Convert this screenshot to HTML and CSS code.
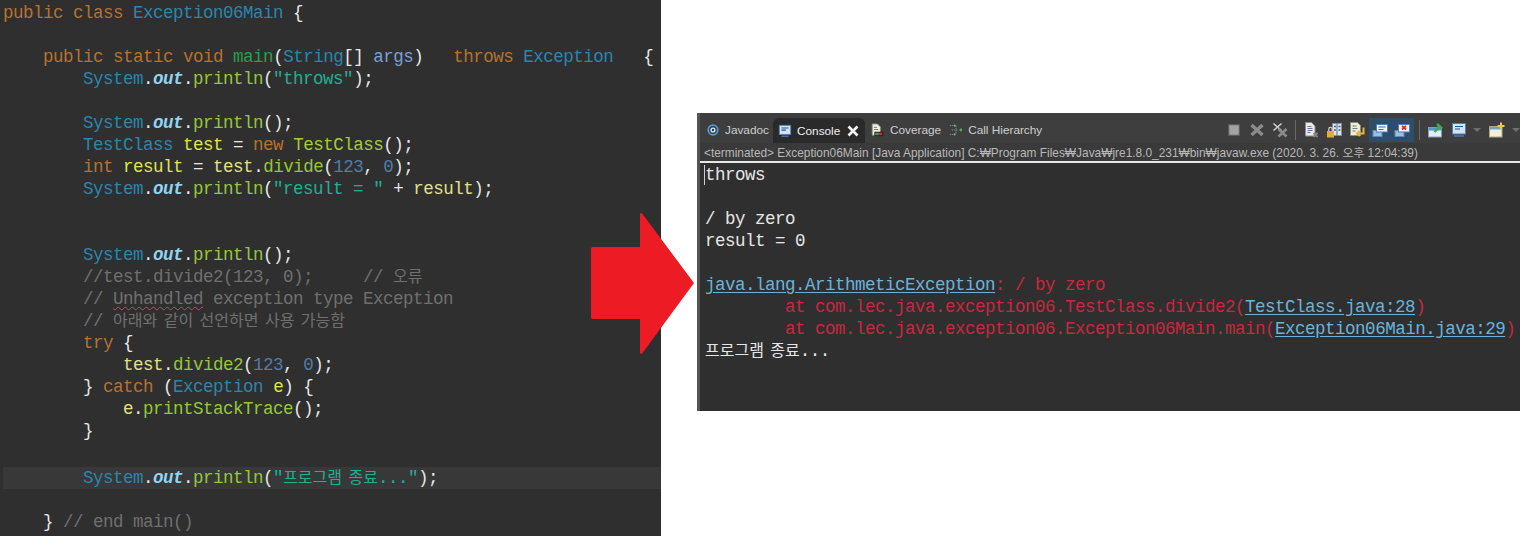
FILE: index.html
```html
<!DOCTYPE html>
<html lang="ko">
<head>
<meta charset="utf-8">
<title>Exception06Main</title>
<link rel="stylesheet" href="styles.css">
</head>
<body>
<main class="page">
<section class="editor">
<div class="code">
<div class="ln"><span class="kw">public</span> <span class="kw">class</span> <span class="ty">Exception06Main</span> <span class="pn">{</span></div>
<div class="ln"> </div>
<div class="ln">    <span class="kw">public</span> <span class="kw">static</span> <span class="kw">void</span> <span class="fn">main</span><span class="pn">(</span><span class="ty">String</span><span class="pn">[]</span> <span class="ar">args</span><span class="pn">)</span>   <span class="kw">throws</span> <span class="ty">Exception</span>   <span class="pn">{</span></div>
<div class="ln">        <span class="ty">System</span><span class="pn">.</span><span class="st">out</span><span class="pn">.</span><span class="me">println</span><span class="pn">(</span><span class="sl">"throws"</span><span class="pn">);</span></div>
<div class="ln"> </div>
<div class="ln">        <span class="ty">System</span><span class="pn">.</span><span class="st">out</span><span class="pn">.</span><span class="me">println</span><span class="pn">();</span></div>
<div class="ln">        <span class="ty">TestClass</span> <span class="va">test</span> <span class="pn">=</span> <span class="kw">new</span> <span class="me2">TestClass</span><span class="pn">();</span></div>
<div class="ln">        <span class="kw">int</span> <span class="va">result</span> <span class="pn">=</span> <span class="va2">test</span><span class="pn">.</span><span class="me">divide</span><span class="pn">(</span><span class="nu">123</span><span class="pn">,</span> <span class="nu">0</span><span class="pn">);</span></div>
<div class="ln">        <span class="ty">System</span><span class="pn">.</span><span class="st">out</span><span class="pn">.</span><span class="me">println</span><span class="pn">(</span><span class="sl">"result = "</span> <span class="pn">+</span> <span class="va2">result</span><span class="pn">);</span></div>
<div class="ln"> </div>
<div class="ln"> </div>
<div class="ln">        <span class="ty">System</span><span class="pn">.</span><span class="st">out</span><span class="pn">.</span><span class="me">println</span><span class="pn">();</span></div>
<div class="ln">        <span class="cm">//test.divide2(123, 0);     // <span class="ko">오류</span></span></div>
<div class="ln">        <span class="cm">// <span class="squig">Unhandled</span> exception type Exception</span></div>
<div class="ln">        <span class="cm">// <span class="ko">아래와 같이 선언하면 사용 가능함</span></span></div>
<div class="ln">        <span class="kw">try</span> <span class="pn">{</span></div>
<div class="ln">            <span class="va2">test</span><span class="pn">.</span><span class="me">divide2</span><span class="pn">(</span><span class="nu">123</span><span class="pn">,</span> <span class="nu">0</span><span class="pn">);</span></div>
<div class="ln">        <span class="pn">}</span> <span class="kw">catch</span> <span class="pn">(</span><span class="ty">Exception</span> <span class="va">e</span><span class="pn">)</span> <span class="pn">{</span></div>
<div class="ln">            <span class="va2">e</span><span class="pn">.</span><span class="me">printStackTrace</span><span class="pn">();</span></div>
<div class="ln">        <span class="pn">}</span></div>
<div class="ln"> </div>
<div class="ln current">        <span class="ty">System</span><span class="pn">.</span><span class="st">out</span><span class="pn">.</span><span class="me">println</span><span class="pn">(</span><span class="sl">"<span class="ko">프로그램 종료</span>..."</span><span class="pn">);</span></div>
<div class="ln"> </div>
<div class="ln">    <span class="pn">}</span> <span class="cm">// end main()</span></div>
</div>
</section>
<section class="console">
<div class="tabbar">
<div class="tab t-javadoc"><svg class="ico" viewBox="0 0 16 16"><circle cx="8" cy="8" r="5.500" fill="none" stroke="#4f9bd6" stroke-width="2"/><circle cx="8" cy="8" r="2.200" fill="none" stroke="#dbe9f4" stroke-width="1.500"/></svg><span>Javadoc</span></div>
<div class="tab active"><svg class="ico" viewBox="0 0 16 16"><rect x="1.500" y="1.500" width="13" height="10.500" fill="#d5e2ef" stroke="#4d7fb8"/><path d="M4 4.500h8M4 7h5" stroke="#27558f" stroke-width="1.200"/><path d="M4 14h8" stroke="#4d7fb8" stroke-width="1.400"/></svg><span>Console</span><svg class="close" viewBox="0 0 12 12"><path d="M1.500 1.500l9 9M10.500 1.500l-9 9" stroke="#f4f4f4" stroke-width="2.600"/></svg></div>
<div class="tab t-cov"><svg class="ico" viewBox="0 0 16 16"><path d="M2.500 1h6l3.500 3.500V14h-9.500z" fill="#efeddf" stroke="#85857a"/><path d="M4.500 5h3.500M4.500 7.500h5" stroke="#6d6d6d"/><rect x="5" y="10" width="10" height="5" fill="#1a1a1a"/><rect x="6" y="11" width="4" height="3" fill="#31a84a"/><rect x="10" y="11" width="4" height="3" fill="#cf2f28"/></svg><span>Coverage</span></div>
<div class="tab"><svg class="ico" viewBox="0 0 16 16"><path d="M1 3h4M1 13h4M3 8h7M8 3v10" stroke="#8d9a8d" stroke-dasharray="1.500 1"/><circle cx="13.500" cy="8" r="1.600" fill="#3fb45e"/><circle cx="6.500" cy="3" r="1.200" fill="#5fb872"/><circle cx="6.500" cy="13" r="1.200" fill="#5fb872"/></svg><span>Call Hierarchy</span></div>
<div class="tools">
<svg class="tool" viewBox="0 0 16 16"><rect x="3" y="3" width="10" height="10" fill="#a3a3a3" stroke="#7f7f7f"/></svg>
<svg class="tool" viewBox="0 0 16 16"><path d="M2.500 3l11 10M13.500 3l-11 10" stroke="#8c8c8c" stroke-width="3.400"/></svg>
<svg class="tool" viewBox="0 0 16 16"><path d="M1.500 1.500l8 7M9.500 1.500l-8 7" stroke="#cfcfcf" stroke-width="1.600"/><path d="M6.500 7l8 7.500M14.500 7l-8 7.500" stroke="#8b8b8b" stroke-width="2.600"/></svg>
<i class="sep"></i>
<svg class="tool" viewBox="0 0 16 16"><path d="M2.500 .5h6l3.500 3.500v10H2.500z" fill="#ecebe0" stroke="#8d8d80"/><path d="M4.500 4.500h4M4.500 6.500h5M4.500 8.500h5M4.500 10.500h3" stroke="#5f7ba0"/><path d="M10.500 11l4 4M14.500 11l-4 4" stroke="#858585" stroke-width="1.800"/></svg>
<svg class="tool" viewBox="0 0 16 16"><rect x="6.500" y="1.500" width="9" height="12" fill="#e0e5ea" stroke="#868e96"/><path d="M11 1.500v12" stroke="#4a6a9a"/><path d="M8 4.500h2M8 8h2M12.500 4.500h2M12.500 8h2" stroke="#3f6199" stroke-width="1.600"/><rect x="1" y="9" width="7" height="6.500" fill="#e4ae34"/><path d="M2.800 9V7a1.700 1.700 0 013.400 0v2" fill="none" stroke="#d2d2d2" stroke-width="1.200"/></svg>
<svg class="tool" viewBox="0 0 16 16"><path d="M1.500 .5h7l3 3v10h-10z" fill="#efecd4" stroke="#8d8d80"/><path d="M3.500 4h4M3.500 6.500h5M3.500 9h3" stroke="#6a7b8f"/><path d="M14.500 5.500v6H8.500M10.800 9L8 11.500l2.800 2.500" fill="none" stroke="#e4b545" stroke-width="2"/></svg>
<span class="toggle">
<svg class="tool" viewBox="0 0 16 16"><rect x="1" y="8.500" width="9" height="6" fill="#9fbedd" stroke="#5f88b4"/><rect x="4.500" y="2.500" width="11" height="7.500" fill="#eef3f8" stroke="#4e7fb5"/><path d="M6.500 5h7M6.500 7.500h5" stroke="#3d6ca5"/></svg>
<svg class="tool" viewBox="0 0 16 16"><rect x="1" y="8.500" width="9" height="6" fill="#9fbedd" stroke="#5f88b4"/><rect x="4.500" y="2.500" width="11" height="7.500" fill="#eef3f8" stroke="#4e7fb5"/><path d="M8 4l4 3.500M12 4l-4 3.500" stroke="#d32c2c" stroke-width="1.700"/></svg>
</span>
<i class="sep"></i>
<svg class="tool pin" viewBox="0 0 16 16"><rect x=".5" y="5.500" width="13" height="9.500" fill="#e4ebf1" stroke="#7fa0ba"/><rect x="1" y="6" width="12" height="2.500" fill="#5596cc"/><path d="M6.500 10l5-5.500M9 2l5 4.500" stroke="#3cab4e" stroke-width="2.600"/></svg>
<span class="drop"><svg class="tool" viewBox="0 0 16 16"><rect x="1.500" y="1.500" width="13" height="10.500" fill="#d5e2ef" stroke="#4d7fb8"/><path d="M4 4.500h8M4 7h5" stroke="#27558f" stroke-width="1.200"/><path d="M3 14h10" stroke="#4d7fb8" stroke-width="1.400"/></svg><b class="caret"></b></span>
<span class="drop last"><svg class="tool" viewBox="0 0 16 16"><rect x=".5" y="4.500" width="12.500" height="10.500" fill="#f2efd6" stroke="#a9a686"/><rect x="1" y="5" width="11.500" height="2.500" fill="#6fa3d0"/><path d="M12 .5v7M8.500 4h7" stroke="#ecc650" stroke-width="2"/></svg><b class="caret"></b></span>
</div>
</div>
<div class="status">&lt;terminated&gt; Exception06Main [Java Application] C:₩Program Files₩Java₩jre1.8.0_231₩bin₩javaw.exe (2020. 3. 26. 오후 12:04:39)</div>
<div class="output">
<div class="ln"><span class="caretline">t</span>hrows</div>
<div class="ln"> </div>
<div class="ln">/ by zero</div>
<div class="ln">result = 0</div>
<div class="ln"> </div>
<div class="ln"><a class="lnk">java.lang.ArithmeticException</a><span class="err">: / by zero</span></div>
<div class="ln err">        at com.lec.java.exception06.TestClass.divide2(<a class="lnk">TestClass.java:28</a>)</div>
<div class="ln err">        at com.lec.java.exception06.Exception06Main.main(<a class="lnk">Exception06Main.java:29</a>)</div>
<div class="ln"><span class="ko">프로그램 종료</span>...</div>
</div>
</section>
<svg class="arrow" viewBox="0 0 103 143"><path d="M49 2 Q50 0 51.500 2 L103 71 L51.500 141 Q50 143 49 141 V107 H2 Q0 107 0 105 V37 Q0 35 2 35 H49Z" fill="#ed1c24"/></svg>
</main>
</body>
</html>
```
FILE: styles.css
```css
* { box-sizing: border-box; }
html, body { margin: 0; padding: 0; background: #fff; }
body { width: 1520px; height: 536px; overflow: hidden; }
.page { position: relative; display: flex; align-items: flex-start; width: 1520px; height: 536px; }
.code, .output { font-family: "Liberation Mono", "Noto Sans CJK KR", monospace; font-size: 17.5px; letter-spacing: -0.5px; }
.ln { white-space: pre; height: 22px; }
.ko { font-family: "Noto Sans CJK KR", sans-serif; font-size: 16px; letter-spacing: 0; word-spacing: 2px; line-height: 0; }
.editor { flex: 0 0 661px; height: 536px; background: #2f2f2f; padding: 1px 0 0 3px; overflow: hidden; }
.code { line-height: 22px; color: #d9e8f7; padding-top: 1px; }
.current { background: #383838; margin-top: 3px; }
.kw { color: #b8722e; }
.ty { color: #2a86ae; }
.pn { color: #e8e8e8; }
.fn { color: #27a04c; }
.ar { color: #7a9fd8; }
.st { color: #8fd4f2; font-weight: bold; font-style: italic; }
.me { color: #94c83c; }
.me2 { color: #a4cc3a; }
.sl { color: #1faf94; }
.va { color: #dfe64a; }
.va2 { color: #e2e088; }
.nu { color: #4f7ea8; }
.cm { color: #6f6f6f; }
.squig { text-decoration: underline wavy #b0506a 1px; text-underline-offset: 2px; }
.console { flex: 1; margin: 113px 0 0 36px; height: 298px; background: #2f2f2f; border-left: 3px solid #545454; display: flex; flex-direction: column; }
.tabbar { flex: 0 0 30px; background: #3e3e3e; display: flex; align-items: stretch; font: 11.800px "Liberation Sans", "Noto Sans CJK KR", sans-serif; color: #cfcfcf; padding-left: 3px; }
.tab { display: flex; align-items: center; gap: 5px; padding: 4px 5px 0 3px; }
.t-javadoc { width: 70px; }
.t-cov { margin-left: 2px; gap: 6px; }
.tab.active { background: #2a2a2a; border-radius: 6px 6px 0 0; color: #f0f0f0; margin-top: 5px; padding: 0 4px 0 5px; width: 92px; }
.ico { width: 14px; height: 14px; flex: none; }
.close { width: 12px; height: 12px; margin-left: 2px; }
.tools { margin-left: auto; display: flex; align-items: center; gap: 7px; padding-top: 4px; }
.tool { width: 16px; height: 16px; display: block; }
.sep { width: 1px; height: 20px; background: #6a6a6a; }
.toggle { display: flex; gap: 6px; background: #2f4d69; padding: 0 0 0 3px; width: 45px; height: 24px; align-items: center; margin: 0 -2px 0 -3px; }
.pin { margin-left: 1px; }
.drop { display: flex; align-items: center; gap: 6px; }
.drop.last { gap: 7px; margin-left: 1px; }
.caret { width: 0; height: 0; border-left: 4px solid transparent; border-right: 4px solid transparent; border-top: 4px solid #6e6e6e; }
.status { flex: 0 0 20px; background: #3a3a3a; border-bottom: 2px solid #e6e6e6; color: #b8b8b8; padding-left: 4px; font: 11.900px/21px "Liberation Sans", "Noto Sans CJK KR", sans-serif; white-space: nowrap; overflow: hidden; }
.output { line-height: 22px; color: #e6e6e6; padding: 1px 0 0 5px; }
.caretline { border-left: 1px solid #cfcfcf; margin-left: -1px; }
.err { color: #c8283f; }
.lnk { color: #6ab4dc; text-decoration: underline; text-underline-offset: 2px; }
.arrow { position: absolute; left: 591px; top: 212px; width: 103px; height: 143px; }
```
